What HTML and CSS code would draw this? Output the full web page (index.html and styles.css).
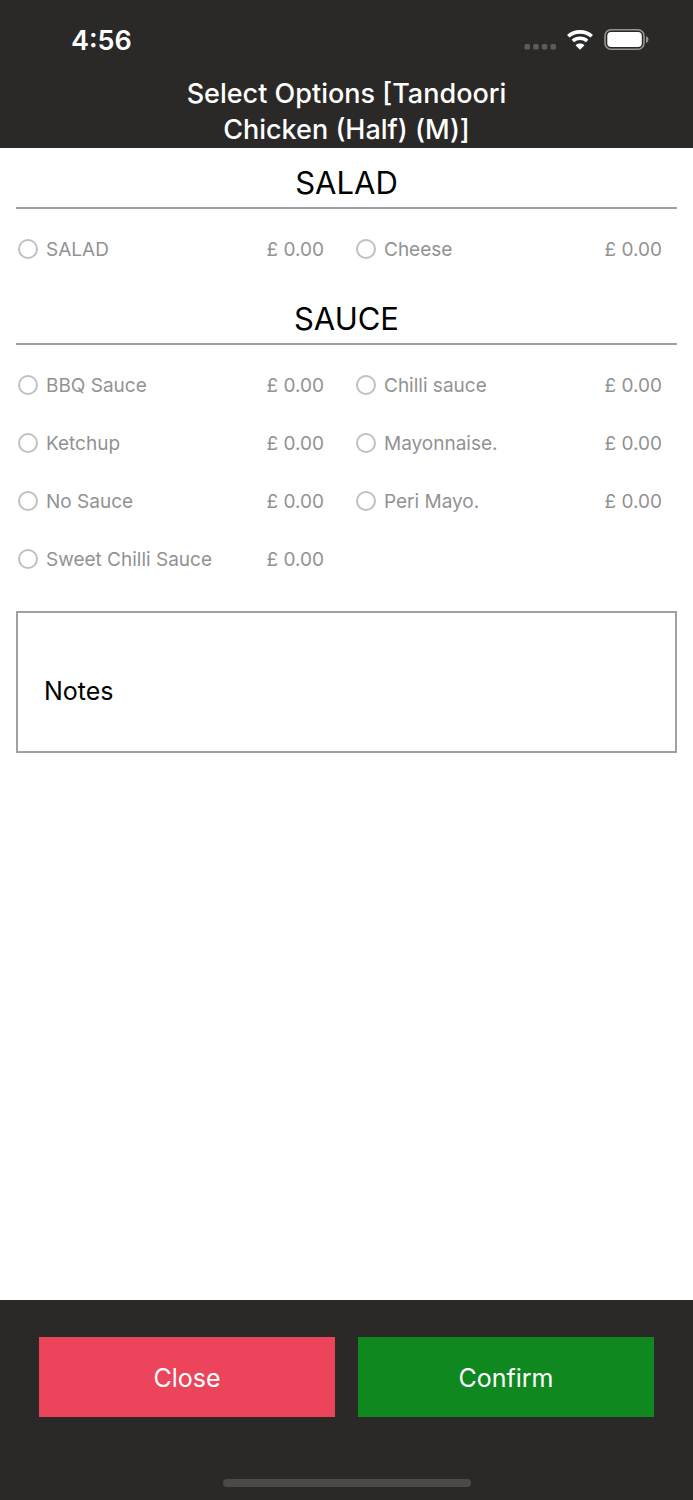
FILE: index.html
```html
<!DOCTYPE html>
<html lang="en">
<head>
<meta charset="utf-8">
<meta name="viewport" content="width=device-width, initial-scale=1">
<title>Select Options</title>
<link rel="stylesheet" href="styles.css">
</head>
<body>
<header class="header">
  <div class="status">
    <time class="clock">4:56</time>
    <div class="indicators">
      <svg class="signal" width="32" height="6" viewBox="0 0 32 6" aria-hidden="true"><rect x=".5" width="5.500" height="5.500" rx="1.600"/><rect x="9.200" width="5.500" height="5.500" rx="1.600"/><rect x="17.800" width="5.500" height="5.500" rx="1.600"/><rect x="26.500" width="5.500" height="5.500" rx="1.600"/></svg>
      <svg class="wifi" width="28" height="20" viewBox="0 0 28 20" aria-hidden="true"><path class="wave" d="M2.300 6.300C5.300 3.400 9.400 1.900 14 1.900S22.700 3.400 25.700 6.300M6.900 11C8.800 9.200 11.300 8.200 14 8.200S19.200 9.200 21.100 11"/><path d="M14 19.800L18.100 15.700Q18.600 15.200 18 14.800C16.900 14 15.500 13.500 14 13.500S11.100 14 10 14.800Q9.400 15.200 9.900 15.700Z"/></svg>
      <svg class="battery" width="45" height="22" viewBox="0 0 45 22" aria-hidden="true"><rect class="battery-shell" x="1" y=".8" width="39" height="19.400" rx="6"/><rect x="3.300" y="3" width="34.500" height="15" rx="3.800"/><path class="battery-cap" d="M42 7Q44.500 8 44.500 10.500T42 14Z"/></svg>
    </div>
  </div>
  <h1 class="title">Select Options [Tandoori Chicken (Half) (M)]</h1>
</header>
<main class="content">
  <section class="group">
    <h2 class="heading">SALAD</h2>
    <div class="options">
      <label class="option"><input class="radio" type="radio" name="salad"><span class="name">SALAD</span><span>£ 0.00</span></label>
      <label class="option"><input class="radio" type="radio" name="salad"><span class="name">Cheese</span><span>£ 0.00</span></label>
    </div>
  </section>
  <section class="group">
    <h2 class="heading">SAUCE</h2>
    <div class="options">
      <label class="option"><input class="radio" type="radio" name="sauce"><span class="name">BBQ Sauce</span><span>£ 0.00</span></label>
      <label class="option"><input class="radio" type="radio" name="sauce"><span class="name">Chilli sauce</span><span>£ 0.00</span></label>
      <label class="option"><input class="radio" type="radio" name="sauce"><span class="name">Ketchup</span><span>£ 0.00</span></label>
      <label class="option"><input class="radio" type="radio" name="sauce"><span class="name">Mayonnaise.</span><span>£ 0.00</span></label>
      <label class="option"><input class="radio" type="radio" name="sauce"><span class="name">No Sauce</span><span>£ 0.00</span></label>
      <label class="option"><input class="radio" type="radio" name="sauce"><span class="name">Peri Mayo.</span><span>£ 0.00</span></label>
      <label class="option"><input class="radio" type="radio" name="sauce"><span class="name">Sweet Chilli Sauce</span><span>£ 0.00</span></label>
    </div>
  </section>
  <input class="notes" type="text" aria-label="Notes" placeholder="Notes">
</main>
<footer class="footer">
  <div class="actions">
    <button class="button close" type="button">Close</button>
    <button class="button confirm" type="button">Confirm</button>
  </div>
  <div class="home"></div>
</footer>
</body>
</html>
```
FILE: styles.css
```css
* { box-sizing: border-box; }
body {
  margin: 0;
  min-height: 100vh;
  display: flex;
  flex-direction: column;
  background: #fff;
  color: #000;
  font-family: Inter, "Liberation Sans", sans-serif;
}
.header {
  background: #2a2928;
  color: #fff;
}
.status {
  display: flex;
  align-items: center;
  justify-content: space-between;
  height: 76px;
  padding: 4px 44px 0 71px;
}
.clock {
  font-size: 27px;
  font-weight: 600;
}
.indicators {
  display: flex;
  align-items: center;
  gap: 10px;
  fill: #fff;
}
.signal {
  margin-top: 14px;
  fill: #5d5c5b;
}
.wave {
  fill: none;
  stroke: #fff;
  stroke-width: 3.6;
}
.battery-shell {
  fill: none;
  stroke: #949493;
  stroke-width: 1.6;
}
.battery-cap { fill: #949493; }
.title {
  max-width: 360px;
  margin: 0 auto;
  font-size: 27px;
  line-height: 36px;
  font-weight: 500;
  text-align: center;
}
.content {
  flex: 1;
  padding: 10px 16px;
}
.heading {
  margin: 0;
  height: 51px;
  border-bottom: 2px solid #a0a0a4;
  font-size: 31px;
  line-height: 50px;
  font-weight: 400;
  text-align: center;
}
.options {
  display: grid;
  grid-template-columns: 1fr 1fr;
  column-gap: 32px;
  padding: 11px 15px 16px 2px;
}
.option {
  display: flex;
  align-items: center;
  height: 58px;
  color: #929292;
  font-size: 19px;
}
.radio {
  appearance: none;
  width: 20px;
  height: 20px;
  margin: 0 8px 0 0;
  border: 2px solid #c0c0c0;
  border-radius: 50%;
}
.radio:checked { background: #929292; }
.name { flex: 1; }
.notes {
  display: block;
  width: 100%;
  height: 142px;
  margin-top: 7px;
  padding: 18px 26px 0;
  border: 2px solid #a0a0a4;
  border-radius: 0;
  background: #fff;
  font: inherit;
  font-size: 25px;
}
.notes::placeholder {
  color: #000;
  opacity: 1;
}
.footer {
  padding: 37px 39px 13px;
  background: #2a2928;
}
.actions {
  display: grid;
  grid-template-columns: 1fr 1fr;
  gap: 23px;
}
.button {
  height: 80px;
  padding: 2px 0 0;
  border: 0;
  color: #fff;
  font: inherit;
  font-size: 25px;
}
.close { background: #ec455b; }
.confirm { background: #108820; }
.home {
  width: 248px;
  height: 8px;
  margin: 62px auto 0;
  border-radius: 4px;
  background: #4b4a49;
}
```
